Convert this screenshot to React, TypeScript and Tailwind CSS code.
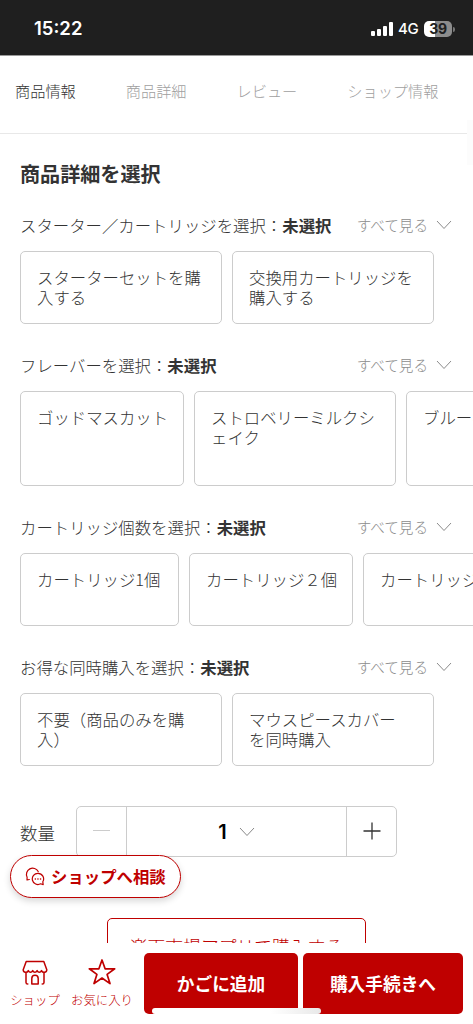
import clsx from "clsx";

type Option = { lines: string[]; width: string };
type Variation = { label: string; height: string; options: Option[] };

const tabs = [
  { label: "商品情報", className: "ml-[15px] text-[#333]" },
  { label: "商品詳細", className: "ml-[50px] text-[#a0a0a0]" },
  { label: "レビュー", className: "ml-[50px] text-[#a0a0a0]" },
  { label: "ショップ情報", className: "ml-[50px] text-[#a0a0a0]" },
];

const variations: Variation[] = [
  {
    label: "スターター／カートリッジを選択",
    height: "h-[73px]",
    options: [
      { lines: ["スターターセットを購", "入する"], width: "w-[202px]" },
      { lines: ["交換用カートリッジを", "購入する"], width: "w-[202px]" },
    ],
  },
  {
    label: "フレーバーを選択",
    height: "h-[95px]",
    options: [
      { lines: ["ゴッドマスカット"], width: "w-[164px]" },
      { lines: ["ストロベリーミルクシ", "ェイク"], width: "w-[202px]" },
      { lines: ["ブルーベリー"], width: "w-[164px]" },
    ],
  },
  {
    label: "カートリッジ個数を選択",
    height: "h-[73px]",
    options: [
      { lines: ["カートリッジ1個"], width: "w-[159px]" },
      { lines: ["カートリッジ２個"], width: "w-[164px]" },
      { lines: ["カートリッジ３個"], width: "w-[164px]" },
    ],
  },
  {
    label: "お得な同時購入を選択",
    height: "h-[73px]",
    options: [
      { lines: ["不要（商品のみを購", "入）"], width: "w-[202px]" },
      { lines: ["マウスピースカバー", "を同時購入"], width: "w-[202px]" },
    ],
  },
];

function Chevron({ className }: { className?: string }) {
  return (
    <svg viewBox="0 0 16 10" className={clsx("h-[10px] w-4 shrink-0", className)} fill="none" stroke="currentColor">
      <path d="M1 1l7 7.5L15 1" />
    </svg>
  );
}

function StatusBar() {
  return (
    <header className="flex h-[55px] shrink-0 items-center bg-[#1f1f1f] pt-[3px] font-['Inter',sans-serif] text-white">
      <span className="ml-[34px] text-[18.5px] font-semibold">15:22</span>
      <svg viewBox="0 0 22 14" className="ml-auto h-[14px] w-[22px]" fill="currentColor">
        <rect x="0" y="9" width="4" height="5" rx="1" />
        <rect x="6" y="7" width="4" height="7" rx="1" />
        <rect x="12" y="4" width="4" height="10" rx="1" />
        <rect x="18" y="0" width="4" height="14" rx="1" />
      </svg>
      <span className="ml-[5px] w-[21px] text-[15px] font-medium tracking-tight">4G</span>
      <div className="ml-[5px] flex h-4 w-7 items-center justify-center rounded-[5px] bg-linear-to-r from-white from-39% to-[#8c8c8c] to-39% text-[14px] font-bold leading-none tracking-tight text-[#1f1f1f]">
        39
      </div>
      <span className="ml-px mr-[18px] h-[5px] w-[2px] rounded-r-full bg-[#777]" />
    </header>
  );
}

function VariationRow({ label, height, options }: Variation) {
  return (
    <section className="mb-[29px]">
      <div className="flex h-6 items-center pr-[21px] text-[16.4px] whitespace-nowrap">
        <span>{label}：</span>
        <span className="font-bold">未選択</span>
        <span className="ml-auto text-[14.6px] text-[#8c8c8c]">すべて見る</span>
        <Chevron className="ml-2 text-[#8c8c8c]" />
      </div>
      <div className="mt-[14px] flex gap-[10px]">
        {options.map((option) => (
          <button
            key={option.lines[0]}
            className={clsx(
              "shrink-0 rounded-[5px] border border-[#ccc] px-4 pt-[15px] text-left text-[16.4px] leading-[20.4px] whitespace-nowrap",
              "flex flex-col items-start",
              height,
              option.width
            )}
          >
            {option.lines.map((line) => (
              <span key={line}>{line}</span>
            ))}
          </button>
        ))}
      </div>
    </section>
  );
}

function ChatIcon() {
  return (
    <svg viewBox="0 0 20 20" className="h-5 w-5" fill="none" stroke="currentColor" strokeWidth="1.2" strokeLinecap="round" strokeLinejoin="round">
      <path d="M13.2 4.6A6.2 6.2 0 0 0 2.1 10.2L2 13l2.3-.5" />
      <path d="M13 6.3a5.6 5.6 0 1 0 2.6 10.5l2.6.8-.4-2.8A5.6 5.6 0 0 0 13 6.3z" />
      <path d="M10.3 12h.1M12.9 12h.1M15.5 12h.1" strokeWidth="1.5" />
    </svg>
  );
}

function ShopIcon() {
  return (
    <svg viewBox="0 0 26 26" className="h-[26px] w-[26px]" fill="none" stroke="currentColor" strokeWidth="1.5" strokeLinecap="round" strokeLinejoin="round">
      <path d="M4.2 1.5h17.6l3 8.3c0 3-4.2 3.4-5.3.8-1 2.2-3.4 2.2-4.4 0-1 2.2-3.4 2.2-4.4 0-1 2.2-3.4 2.2-4.4 0-1.1 2.6-5.1 2.2-5.1-.8z" />
      <path d="M4 13v9.4c0 1.2.6 1.6 1.8 1.6M22 13v9.4c0 1.2-.6 1.6-1.8 1.6" />
      <path d="M9.8 24v-5.5a3.2 3.2 0 0 1 6.4 0V24z" />
    </svg>
  );
}

function StarIcon() {
  return (
    <svg viewBox="0 0 28 28" className="h-7 w-7" fill="none" stroke="currentColor" strokeWidth="1.7" strokeLinejoin="round">
      <path d="M14 2l3.1 8.8h9.6l-7.6 5.6 2.9 9.2-8-5.6-8 5.6 2.9-9.2-7.6-5.6h9.6z" />
    </svg>
  );
}

export default function App() {
  return (
    <div className="relative flex h-[1024px] w-[473px] flex-col overflow-hidden bg-white font-['Noto_Sans_CJK_JP',sans-serif] font-light text-[#333]">
      <StatusBar />

      {/* Tabs */}
      <nav className="flex h-[79px] shrink-0 border-t border-b border-t-[#999] border-b-[#e8e8e8] pt-[22px] text-[15.2px] leading-6 whitespace-nowrap">
        {tabs.map((tab) => (
          <a key={tab.label} className={tab.className}>
            {tab.label}
          </a>
        ))}
      </nav>
      <div className="absolute top-[120px] right-0 h-[45px] w-[6px] bg-[#fcfcfc]" />

      {/* Product options */}
      <main className="h-[809px] shrink-0 overflow-hidden pl-5">
        <h1 className="mt-[26px] mb-[25px] text-[20.1px] leading-7 font-bold">商品詳細を選択</h1>

        {variations.map((variation) => (
          <VariationRow key={variation.label} {...variation} />
        ))}

        {/* Quantity */}
        <div className="mt-10 flex items-center">
          <span className="w-14 pt-[3px] text-[17.5px]">数量</span>
          <div className="flex h-[51px] w-[321px] rounded-[5px] border border-[#ccc]">
            <button className="flex w-[49px] items-center justify-center">
              <span className="mb-[2px] h-px w-[17px] bg-[#ccc]" />
            </button>
            <div className="flex flex-1 items-center justify-center border-x border-[#ccc]">
              <span className="font-['Inter',sans-serif] text-[20px] font-semibold text-black">1</span>
              <Chevron className="ml-[12px] text-[#888]" />
            </div>
            <button className="flex w-[49px] items-center justify-center pb-[2px]">
              <svg viewBox="0 0 18 18" className="h-[18px] w-[18px]" fill="none" stroke="currentColor" strokeWidth="1.3">
                <path d="M9 .5v17M.5 9h17" />
              </svg>
            </button>
          </div>
        </div>

        <button className="mt-[61px] ml-[87px] h-[57px] w-[259px] rounded-[5px] border border-[#bf0000] text-[17.8px] text-[#bf0000]">
          楽天市場アプリで購入する
        </button>
      </main>

      <button className="absolute top-[855px] left-[10px] flex h-[43px] w-[171px] items-center rounded-full border border-[#bf0000] bg-white pl-[14px] text-[16.4px] font-bold whitespace-nowrap text-[#bf0000] shadow-[0_3px_7px_rgba(0,0,0,0.16)]">
        <ChatIcon />
        <span className="ml-[6px]">ショップへ相談</span>
      </button>

      {/* Purchase bar */}
      <footer className="relative flex flex-1 bg-white pt-[10px] text-[#bf0000]">
        <a className="flex w-[70px] flex-col items-center pt-[7px] text-[12.4px] leading-5 whitespace-nowrap">
          <ShopIcon />
          <span className="mt-[4px]">ショップ</span>
        </a>
        <a className="flex w-[64px] flex-col items-center pt-[5px] text-[12.4px] leading-5 whitespace-nowrap">
          <StarIcon />
          <span className="mt-[4px]">お気に入り</span>
        </a>
        <button className="ml-[10px] h-[61px] w-[154px] rounded-[5px] bg-[#bf0000] text-[17.7px] font-bold text-white">
          かごに追加
        </button>
        <button className="ml-[5px] h-[61px] w-[160px] rounded-[5px] bg-[#bf0000] text-[17.7px] font-bold text-white">
          購入手続きへ
        </button>
        <div className="absolute top-[65px] left-[152px] h-[6px] w-[169px] rounded-full bg-linear-to-r from-white from-70% to-[#e8e8e8]" />
      </footer>
    </div>
  );
}
